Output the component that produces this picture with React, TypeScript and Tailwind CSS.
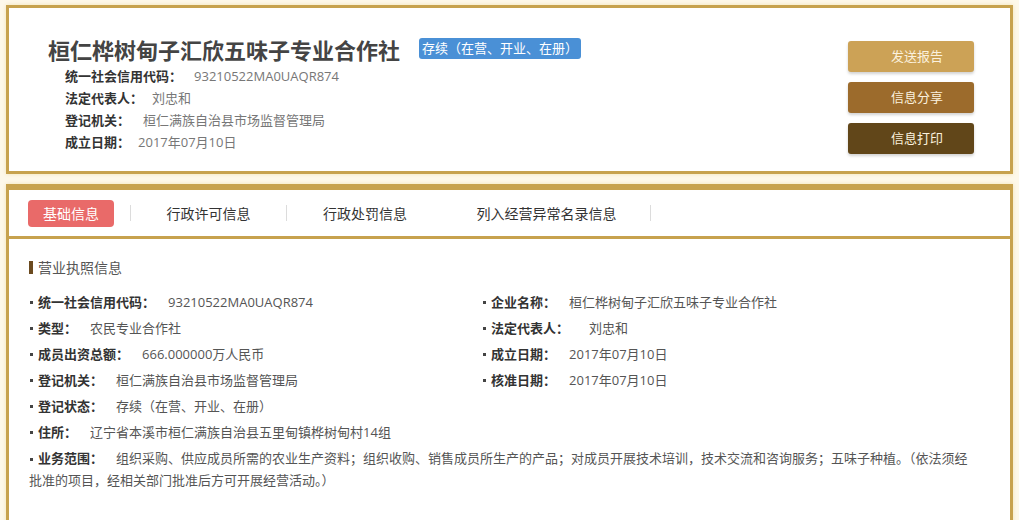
import React from "react";

const gold = "border-[#c7a24e]";

function Dot() {
  return <span className="inline-block w-[3px] h-[3px] bg-[#444] align-middle mr-[5px] ml-[1px]" />;
}

function Field({ label, value, gap = 13 }: { label: string; value: string; gap?: number }) {
  return (
    <div className="h-[26px] leading-[26px] flex items-center whitespace-nowrap">
      <Dot />
      <span className="font-bold text-[#333]">{label}</span>
      <span className="text-[#555]" style={{ marginLeft: gap }}>{value}</span>
    </div>
  );
}

function HeadRow({ label, value, gap }: { label: string; value: string; gap: number }) {
  return (
    <div className="h-[22px] leading-[22px] flex items-center whitespace-nowrap text-[13px]">
      <span className="font-bold text-[#333]">{label}</span>
      <span className="text-[#777]" style={{ marginLeft: gap }}>{value}</span>
    </div>
  );
}

export default function App() {
  return (
    <div className="w-[1019px] h-[520px] overflow-hidden bg-[#fdf8ea] px-[6px] pt-[5px] font-['Open_Sans','Noto_Sans_CJK_SC',sans-serif]">
      {/* company header card */}
      <div className={`h-[169px] border-[3px] ${gold} bg-white flex shadow-[0_0_4px_#f3e3b4]`}>
        <div className="flex-1 pl-[39px] pt-[27px]">
          <div className="flex items-center h-[30px]">
            <h1 className="text-[22px] leading-[30px] font-bold text-[#444] whitespace-nowrap">桓仁桦树甸子汇欣五味子专业合作社</h1>
            <span className="ml-[19px] mb-[3px] h-[21px] leading-[21px] px-[3px] rounded-[3px] bg-[#4a90d6] text-white text-[13px] whitespace-nowrap">
              存续（在营、开业、在册）
            </span>
          </div>
          <div className="pl-[17px]">
            <HeadRow label="统一社会信用代码：" value="93210522MA0UAQR874" gap={12} />
            <HeadRow label="法定代表人：" value="刘忠和" gap={9} />
            <HeadRow label="登记机关：" value="桓仁满族自治县市场监督管理局" gap={13} />
            <HeadRow label="成立日期：" value="2017年07月10日" gap={8} />
          </div>
        </div>
        <div className="pt-[33px] pr-[36px] flex flex-col gap-[10px]">
          {[
            ["发送报告", "bg-[#cca256]"],
            ["信息分享", "bg-[#9c6b2c]"],
            ["信息打印", "bg-[#614619]"],
          ].map(([t, c]) => (
            <button
              key={t}
              className={`w-[126px] h-[31px] rounded-[3px] ${c} text-[#fbf1de] text-[13px] pl-[12px] shadow-[0_2px_3px_rgba(0,0,0,0.18)]`}
            >
              {t}
            </button>
          ))}
        </div>
      </div>

      {/* detail card */}
      <div className={`mt-[10px] border-x-[3px] border-t-[6px] ${gold} bg-white h-[400px] shadow-[0_0_4px_#f3e3b4]`}>
        <div className={`h-[49px] border-b-[3px] ${gold} flex items-center pl-[19px] text-[14px] text-[#333]`}>
          <div className="w-[86px] h-[27px] rounded-[4px] bg-[#e96a69] text-white flex items-center justify-center">基础信息</div>
          <div className="ml-[16px] w-px h-[16px] bg-[#dcdcdc]" />
          <div className="w-[155px] text-center">行政许可信息</div>
          <div className="w-px h-[16px] bg-[#dcdcdc]" />
          <div className="w-[156px] text-center">行政处罚信息</div>
          <div className="w-[207px] text-center">列入经营异常名录信息</div>
          <div className="w-px h-[16px] bg-[#dcdcdc]" />
        </div>

        <div className="pl-[20px] pt-[18px] text-[13px]">
          <div className="flex items-center h-[20px]">
            <span className="w-[4px] h-[13px] bg-[#6b4a1f] mr-[5px]" />
            <span className="text-[14px] text-[#555]">营业执照信息</span>
          </div>
          <div className="mt-[12px] grid grid-cols-[453px_1fr]">
            <Field label="统一社会信用代码：" value="93210522MA0UAQR874" />
            <Field label="企业名称：" value="桓仁桦树甸子汇欣五味子专业合作社" />
            <Field label="类型：" value="农民专业合作社" />
            <Field label="法定代表人：" value="刘忠和" gap={20} />
            <Field label="成员出资总额：" value="666.000000万人民币" />
            <Field label="成立日期：" value="2017年07月10日" />
            <Field label="登记机关：" value="桓仁满族自治县市场监督管理局" />
            <Field label="核准日期：" value="2017年07月10日" />
          </div>
          <Field label="登记状态：" value="存续（在营、开业、在册）" />
          <Field label="住所：" value="辽宁省本溪市桓仁满族自治县五里甸镇桦树甸村14组" />
          <p className="mt-[2px] leading-[22px] pr-[20px]">
            <Dot />
            <span className="font-bold text-[#333]">业务范围：</span>
            <span className="text-[#555] ml-[13px]">
              组织采购、供应成员所需的农业生产资料；组织收购、销售成员所生产的产品；对成员开展技术培训，技术交流和咨询服务；五味子种植。（依法须经
              <br />
              批准的项目，经相关部门批准后方可开展经营活动。）
            </span>
          </p>
        </div>
      </div>
    </div>
  );
}
